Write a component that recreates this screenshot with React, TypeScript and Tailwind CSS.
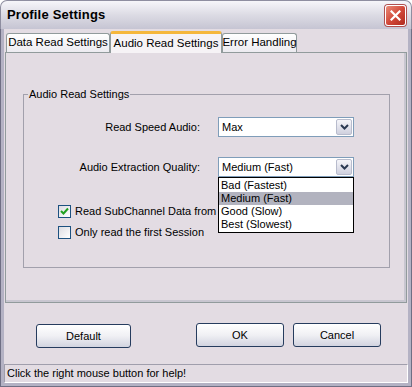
import React from 'react';

const FONT = { fontFamily: '"Liberation Sans", Arial, sans-serif' };

const Chevron: React.FC = () => (
  <svg width="9" height="6" viewBox="0 0 9 6">
    <path d="M1 1 L4.5 4.5 L8 1" fill="none" stroke="#2b3a52" strokeWidth="2" />
  </svg>
);

const Select: React.FC<{ value: string; children?: React.ReactNode }> = ({ value, children }) => (
  <div className="relative w-[136px] h-[20px] border border-[#7f9db9] bg-white flex items-center">
    <span className="flex-1 pl-[3px] text-[11px] text-black leading-none">{value}</span>
    <div className="w-[16px] h-[16px] mr-px rounded-[2px] border border-[#b8bccd] bg-gradient-to-b from-[#f6f6fa] to-[#cfd0de] flex items-center justify-center">
      <Chevron />
    </div>
    {children}
  </div>
);

const Checkbox: React.FC<{ checked?: boolean; label: string; clip?: string }> = ({ checked, label, clip }) => (
  <div className="flex items-center h-[13px] gap-[4px] whitespace-nowrap">
    <div className="w-[13px] h-[13px] border border-[#1c5180] bg-gradient-to-br from-[#dcdce2] to-white flex items-center justify-center">
      {checked && (
        <svg width="9" height="9" viewBox="0 0 9 9">
          <path d="M1 4 L3.5 6.5 L8 1.5" fill="none" stroke="#21a121" strokeWidth="2" />
        </svg>
      )}
    </div>
    <span className={`text-[11px] text-black leading-none overflow-hidden ${clip ?? ''}`}>{label}</span>
  </div>
);

const XpButton: React.FC<{ label: string; width: string }> = ({ label, width }) => (
  <div className={`${width} h-[24px] rounded-[3px] border border-[#263c5e] bg-gradient-to-b from-white via-[#f0f0f4] to-[#d2d4e0] flex items-center justify-center text-[11px] text-black`}>
    {label}
  </div>
);

const qualityOptions = ['Bad (Fastest)', 'Medium (Fast)', 'Good (Slow)', 'Best (Slowest)'];

const App: React.FC = () => {
  return (
    <div className="w-[412px] h-[387px] bg-white flex flex-col" style={FONT}>
      {/* Title bar */}
      <div className="h-[29px] rounded-t-[7px] border border-b-0 border-[#8e8ea0] bg-gradient-to-b from-[#f6f6fa] via-[#dcdbe4] to-[#c6c5d3] flex items-center justify-between pl-[6px] pr-[5px]">
        <span className="text-[13px] font-bold text-black tracking-[0.2px]">Profile Settings</span>
        <div className="w-[21px] h-[21px] rounded-[3px] border border-white bg-gradient-to-br from-[#e88a78] via-[#d2493a] to-[#b02a1e] flex items-center justify-center shadow-[0_0_0_1px_#b05050]">
          <svg width="11" height="11" viewBox="0 0 11 11">
            <path d="M1.5 1.5 L9.5 9.5 M9.5 1.5 L1.5 9.5" stroke="white" strokeWidth="2.2" strokeLinecap="square" />
          </svg>
        </div>
      </div>

      {/* Window frame */}
      <div className="flex-1 border-x border-b border-[#6f6f84] flex flex-col">
        <div className="flex-1 border-x-[3px] border-b-[3px] border-[#b4b2c4] bg-[#e3dce3] flex flex-col">
          {/* Tabs */}
          <div className="h-[23px] flex items-end pl-[2px] whitespace-nowrap">
            <div className="h-[19px] w-[104px] rounded-t-[3px] border border-b-0 border-[#919b9c] bg-gradient-to-b from-white to-[#ecebf0] flex items-center justify-center text-[11.5px] text-black">
              Data Read Settings
            </div>
            <div className="h-[22px] w-[112px] rounded-t-[3px] border-x border-[#919b9c] border-t-[3px] border-t-[#f5b73c] bg-[#f6f3f6] flex items-center justify-center text-[11.5px] text-black -mb-px relative z-10">
              Audio Read Settings
            </div>
            <div className="h-[19px] w-[75px] rounded-t-[3px] border border-b-0 border-[#919b9c] bg-gradient-to-b from-white to-[#ecebf0] flex items-center justify-center text-[11.5px] text-black">
              Error Handling
            </div>
          </div>

          {/* Tab panel */}
          <div className="mx-px h-[251px] border border-[#919b9c] bg-[#e3dce3] shadow-[inset_-2px_-2px_0_#c8c6d0]">
            <div className="ml-[17px] mt-[41px] w-[367px] h-[174px] border border-[#a2a0ac] relative">
              <span className="absolute -top-[8px] left-[4px] px-px bg-[#e3dce3] text-[11px] text-black leading-[14px]">
                Audio Read Settings
              </span>

              <div className="mt-[22px] h-[20px] flex items-center">
                <span className="w-[176px] text-right text-[11px] text-black">Read Speed Audio:</span>
                <div className="ml-[18px]">
                  <Select value="Max" />
                </div>
              </div>

              <div className="mt-[20px] h-[20px] flex items-center relative z-10">
                <span className="w-[176px] text-right text-[11px] text-black">Audio Extraction Quality:</span>
                <div className="ml-[18px]">
                  <Select value="Medium (Fast)">
                    <div className="absolute -left-px top-[19px] w-[136px] border border-black bg-white py-px">
                      {qualityOptions.map((opt) => (
                        <div
                          key={opt}
                          className={`h-[13px] pl-[2px] flex items-center text-[11px] leading-none text-black ${opt === 'Medium (Fast)' ? 'bg-[#b2b3bf]' : ''}`}
                        >
                          {opt}
                        </div>
                      ))}
                    </div>
                  </Select>
                </div>
              </div>

              <div className="ml-[34px] mt-[28px] flex flex-col gap-[8px]">
                <Checkbox checked label="Read SubChannel Data from Audio Tracks" clip="w-[142px]" />
                <Checkbox label="Only read the first Session" />
              </div>
            </div>
          </div>

          {/* Buttons */}
          <div className="h-[61px] flex items-start pt-[20px] pl-[32px]">
            <div className="mt-px">
              <XpButton label="Default" width="w-[95px]" />
            </div>
            <div className="ml-[65px] flex gap-[9px]">
              <XpButton label="OK" width="w-[88px]" />
              <XpButton label="Cancel" width="w-[88px]" />
            </div>
          </div>

          {/* Status bar */}
          <div className="h-[19px] border border-t-[#a09eac] border-l-[#a09eac] border-r-white border-b-white flex items-center pl-[2px] text-[11px] text-black">
            Click the right mouse button for help!
          </div>
        </div>
      </div>
    </div>
  );
};

export default App;
